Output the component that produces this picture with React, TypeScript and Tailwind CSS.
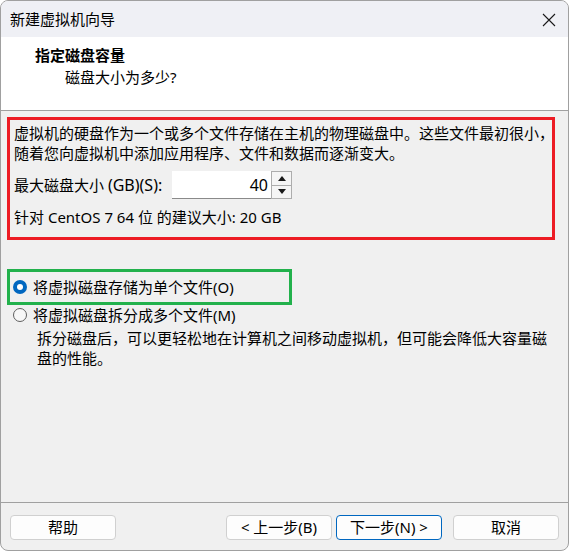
import React from 'react';

const font = { fontFamily: '"Noto Sans", "Noto Sans CJK SC", sans-serif' };

function Radio({ checked }: { checked: boolean }) {
  return checked ? (
    <span className="flex h-[14px] w-[14px] items-center justify-center rounded-full bg-[#0067c0]">
      <span className="h-[6px] w-[6px] rounded-full bg-white" />
    </span>
  ) : (
    <span className="h-[14px] w-[14px] rounded-full border border-[#5f5f5f] bg-[#f7f7f7]" />
  );
}

function Button({ label, primary }: { label: string; primary?: boolean }) {
  return (
    <button
      className={
        primary
          ? 'h-[25px] w-[106px] rounded-[4px] border border-[#0067c0] bg-[#fdfdfd] text-[15px] leading-none text-black'
          : 'h-[25px] w-[106px] rounded-[4px] border border-[#d0d0d0] bg-[#fdfdfd] text-[15px] leading-none text-black'
      }
    >
      {label}
    </button>
  );
}

export default function App() {
  return (
    <div className="h-[551px] w-[570px] bg-white" style={font}>
      <div className="flex h-[551px] w-[569px] flex-col overflow-hidden rounded-[8px] border border-[#a0a0a0] bg-[#f0f0f0] text-black">
        {/* Title bar */}
        <div className="flex h-[36px] shrink-0 items-center justify-between bg-[#eff0f5] pl-[9px] pr-[12px]">
          <span className="text-[15px] leading-none">新建虚拟机向导</span>
          <svg width="14" height="14" viewBox="0 0 14 14" className="mt-[1px]">
            <path d="M1 1 L13 13 M13 1 L1 13" stroke="#1a1a1a" strokeWidth="1.1" fill="none" />
          </svg>
        </div>

        {/* Header */}
        <div className="h-[74px] shrink-0 border-b border-[#a0a0a0] bg-white pl-[34px] pt-[8px]">
          <div className="text-[15px] font-bold leading-[20px]">指定磁盘容量</div>
          <div className="ml-[30px] mt-[2px] text-[15px] leading-[20px]">磁盘大小为多少?</div>
        </div>

        {/* Body */}
        <div className="flex-1 px-[6px] pt-[6px]">
          <div className="h-[123px] w-[548px] border-[3px] border-[#ed1c24] pl-[4px] pt-[3px]">
            <p className="whitespace-nowrap text-[15px] leading-[20px]">
              虚拟机的硬盘作为一个或多个文件存储在主机的物理磁盘中。这些文件最初很小，
              <br />
              随着您向虚拟机中添加应用程序、文件和数据而逐渐变大。
            </p>
            <div className="mt-[8px] flex h-[28px] items-center">
              <span className="w-[158px] whitespace-nowrap text-[15px] leading-none">
                最大磁盘大小 <span className="text-[16px]">(GB)(S):</span>
              </span>
              <div className="flex h-[28px] w-[99px] items-center justify-end border-b border-[#8a8a8a] bg-white pr-[3px] text-[16px] leading-none">
                40
              </div>
              <div className="flex h-[28px] w-[21px] flex-col border border-[#adadad] bg-[#f5f5f5]">
                <div className="flex flex-1 items-center justify-center border-b border-[#adadad]">
                  <svg width="8" height="5" viewBox="0 0 8 5">
                    <path d="M0 5 L4 0 L8 5 Z" fill="#1a1a1a" />
                  </svg>
                </div>
                <div className="flex flex-1 items-center justify-center">
                  <svg width="8" height="5" viewBox="0 0 8 5">
                    <path d="M0 0 L8 0 L4 5 Z" fill="#1a1a1a" />
                  </svg>
                </div>
              </div>
            </div>
            <div className="mt-[8px] whitespace-nowrap text-[15px] leading-[20px]">
              针对 CentOS 7 64 位 的建议大小: 20 GB
            </div>
          </div>

          <div className="mt-[29px] flex h-[36px] w-[285px] items-center gap-[6px] border-[3px] border-[#22b14c] pl-[3px]">
            <Radio checked />
            <span className="whitespace-nowrap text-[15px] leading-none">将虚拟磁盘存储为单个文件(O)</span>
          </div>
          <div className="flex h-[20px] items-center gap-[6px] pl-[6px]">
            <Radio checked={false} />
            <span className="whitespace-nowrap text-[15px] leading-none">将虚拟磁盘拆分成多个文件(M)</span>
          </div>
          <p className="ml-[30px] mt-[3px] whitespace-nowrap text-[15px] leading-[20px]">
            拆分磁盘后，可以更轻松地在计算机之间移动虚拟机，但可能会降低大容量磁
            <br />
            盘的性能。
          </p>
        </div>

        {/* Footer */}
        <div className="flex h-[48px] shrink-0 items-start border-t border-[#a0a0a0] px-[9px] pt-[12px]">
          <Button label="帮助" />
          <div className="ml-auto flex gap-[4px]">
            <Button label="< 上一步(B)" />
            <Button label="下一步(N) >" primary />
          </div>
          <div className="ml-[11px]">
            <Button label="取消" />
          </div>
        </div>
      </div>
    </div>
  );
}
